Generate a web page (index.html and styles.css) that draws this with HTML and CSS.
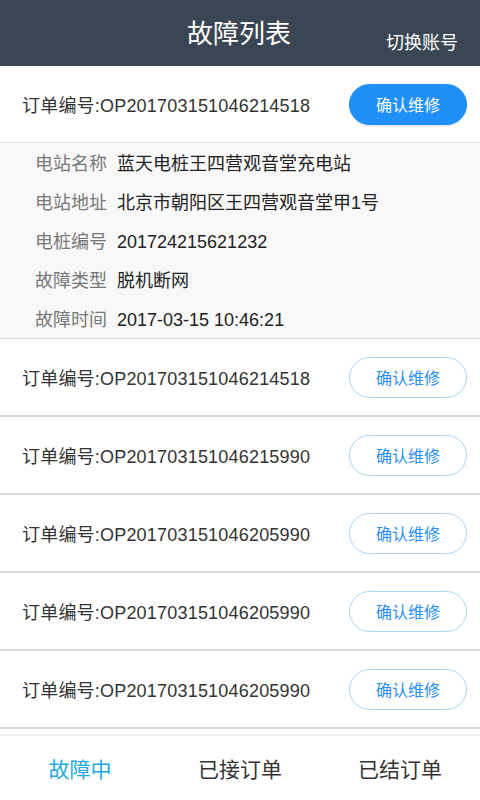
FILE: index.html
```html
<!DOCTYPE html>
<html lang="zh-CN">
<head>
    <meta charset="UTF-8">
    <title>故障列表</title>
    <link rel="stylesheet" href="styles.css">
</head>
<body>
<div class="page">
    <div class="header">
        <h1>故障列表</h1>
        <a class="switch" href="javascript:;">切换账号</a>
    </div>
    <div class="list">
        <div class="order open">
            <div class="order-head">
                <span class="order-no">订单编号:OP201703151046214518</span>
                <a class="btn btn-fill" href="javascript:;">确认维修</a>
            </div>
            <div class="detail">
                <div class="detail-row"><span class="label">电站名称</span><span class="value">蓝天电桩王四营观音堂充电站</span></div>
                <div class="detail-row"><span class="label">电站地址</span><span class="value">北京市朝阳区王四营观音堂甲1号</span></div>
                <div class="detail-row"><span class="label">电桩编号</span><span class="value">201724215621232</span></div>
                <div class="detail-row"><span class="label">故障类型</span><span class="value">脱机断网</span></div>
                <div class="detail-row"><span class="label">故障时间</span><span class="value">2017-03-15 10:46:21</span></div>
            </div>
        </div>
        <div class="order">
            <div class="order-head">
                <span class="order-no">订单编号:OP201703151046214518</span>
                <a class="btn" href="javascript:;">确认维修</a>
            </div>
        </div>
        <div class="order">
            <div class="order-head">
                <span class="order-no">订单编号:OP201703151046215990</span>
                <a class="btn" href="javascript:;">确认维修</a>
            </div>
        </div>
        <div class="order">
            <div class="order-head">
                <span class="order-no">订单编号:OP201703151046205990</span>
                <a class="btn" href="javascript:;">确认维修</a>
            </div>
        </div>
        <div class="order">
            <div class="order-head">
                <span class="order-no">订单编号:OP201703151046205990</span>
                <a class="btn" href="javascript:;">确认维修</a>
            </div>
        </div>
        <div class="order">
            <div class="order-head">
                <span class="order-no">订单编号:OP201703151046205990</span>
                <a class="btn" href="javascript:;">确认维修</a>
            </div>
        </div>
    </div>
    <div class="tabbar">
        <a class="tab active" href="javascript:;">故障中</a>
        <a class="tab" href="javascript:;">已接订单</a>
        <a class="tab" href="javascript:;">已结订单</a>
    </div>
</div>
</body>
</html>
```

FILE: styles.css
```css
*{
    padding:0px;
    margin:0px;
    box-sizing:border-box;
}
body{
    font-family:"Liberation Sans","Noto Sans CJK SC",sans-serif;
    background:#fff;
    color:#333;
}
a{
    text-decoration:none;
}
.page{
    display:flex;
    flex-direction:column;
    height:100vh;
    overflow:hidden;
}
.header{
    height:66px;
    flex-shrink:0;
    background:#3a4654;
    color:#fff;
    display:flex;
    justify-content:space-between;
    align-items:center;
    padding:0 22px 0 187px;
}
.header h1{
    font-size:26px;
    font-weight:normal;
    margin-top:-4px;
}
.header .switch{
    color:#fff;
    font-size:18px;
    margin-top:16px;
}
.list{
    flex:1;
    overflow:hidden;
}
.order{
    border-bottom:2px solid #dadada;
}
.order.open{
    border-bottom:1px solid #dadada;
}
.order-head{
    height:76px;
    display:flex;
    align-items:center;
    justify-content:space-between;
    padding:0 13px 0 22px;
}
.order-no{
    font-size:18px;
    letter-spacing:0.2px;
    color:#333;
}
.btn{
    width:118px;
    height:41px;
    border-radius:21px;
    border:1px solid #a9d3f5;
    color:#2b8ef0;
    font-size:16px;
    display:flex;
    align-items:center;
    justify-content:center;
    background:#fff;
}
.btn-fill{
    background:#1e90f7;
    border-color:#1e90f7;
    color:#fff;
    box-shadow:0 1px 2px rgba(0,0,0,0.15);
}
.detail{
    background:#f8f8f8;
    border-top:1px solid #e2e2e2;
    padding-left:35px;
}
.detail-row{
    height:39px;
    padding-top:3px;
    line-height:36px;
    font-size:18px;
    white-space:nowrap;
}
.detail-row .label{
    color:#777;
    display:inline-block;
    width:82px;
}
.detail-row .value{
    color:#222;
}
.tabbar{
    height:66px;
    flex-shrink:0;
    border-top:2px solid #f0f0f0;
    display:flex;
    align-items:center;
    margin-top:5px;
}
.tab{
    flex:1;
    text-align:center;
    font-size:21px;
    color:#333;
}
.tab.active{
    color:#1ba8e3;
}
```
